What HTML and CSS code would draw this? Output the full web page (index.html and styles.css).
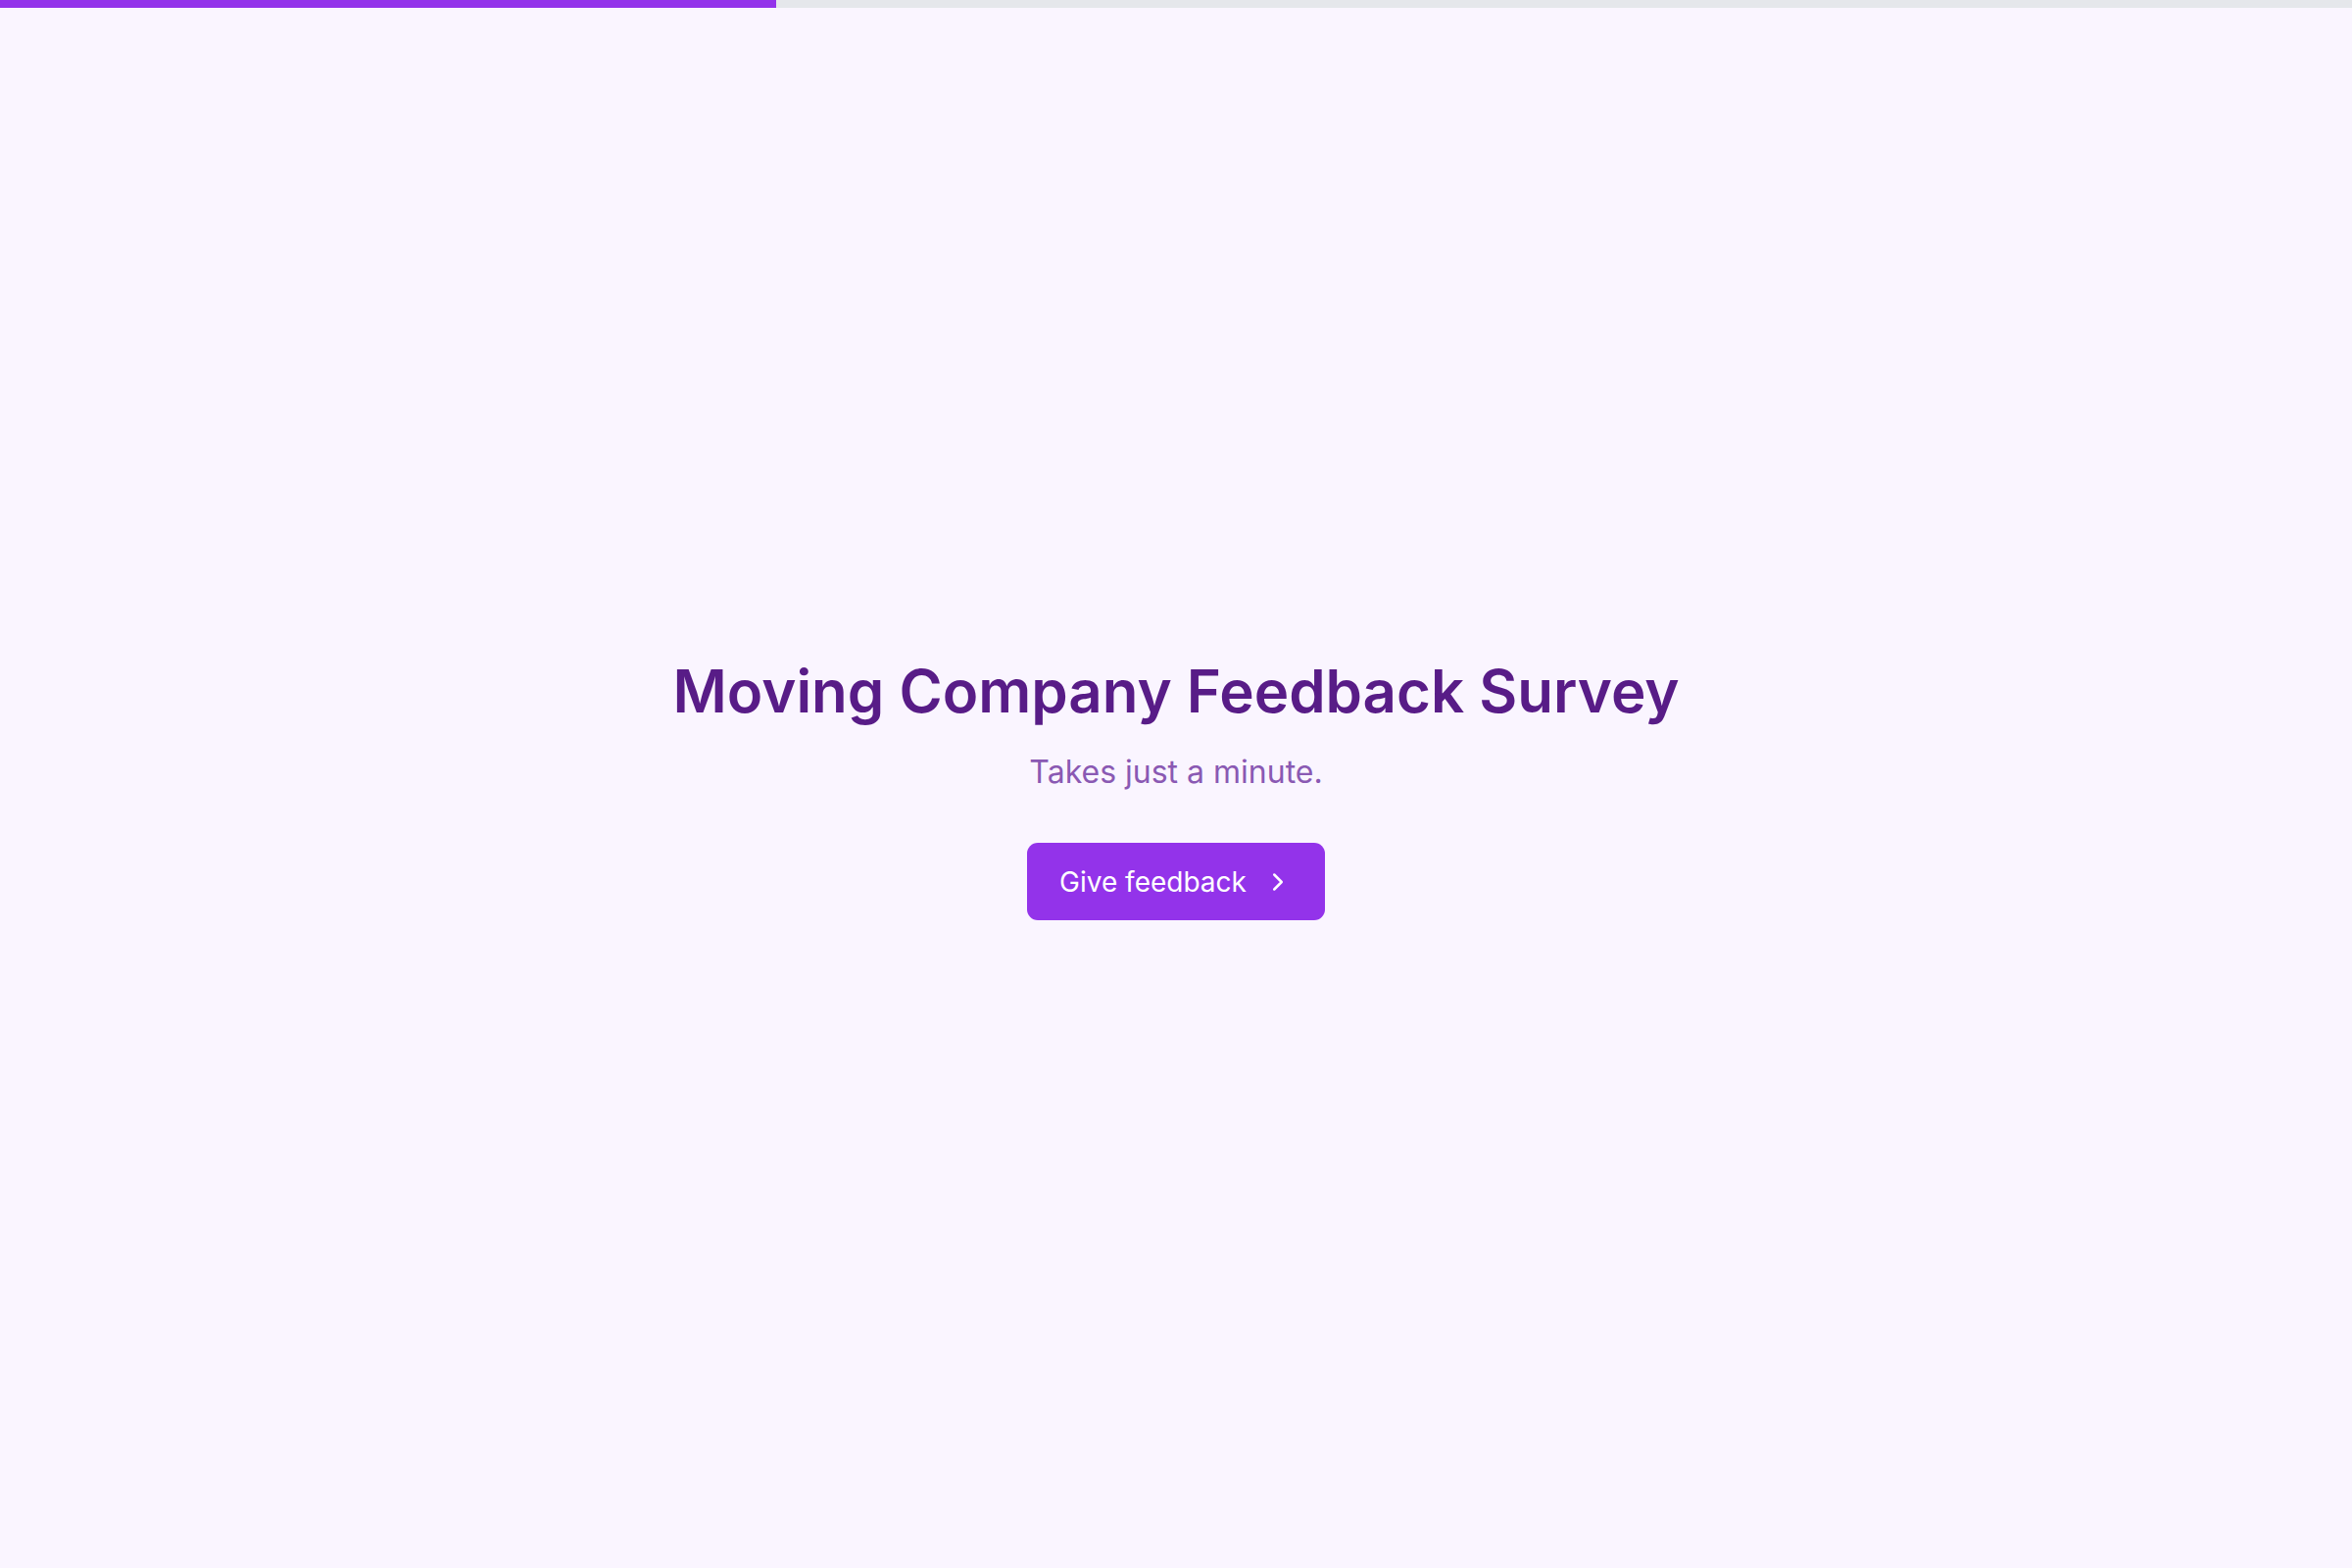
FILE: index.html
```html
<!DOCTYPE html>
<html lang="en">
<head>
<meta charset="utf-8">
<title>Moving Company Feedback Survey</title>
<link rel="stylesheet" href="styles.css">
</head>
<body>
<div class="progress"><div class="progress-fill" style="width:33%"></div></div>
<main class="intro">
  <h1 class="title">Moving Company Feedback Survey</h1>
  <p class="subtitle">Takes just a minute.</p>
  <button class="cta" type="button">
    <span>Give feedback</span>
    <svg class="cta-icon" viewBox="0 0 24 24" fill="none" stroke="currentColor" stroke-width="2" stroke-linecap="round" stroke-linejoin="round"><path d="m9 18 6-6-6-6"/></svg>
  </button>
</main>
</body>
</html>
```

FILE: styles.css
```css
* { box-sizing: border-box; }
html, body { margin: 0; padding: 0; }
body {
  min-height: 100vh;
  background: #faf5ff;
  font-family: Inter, "Noto Sans", sans-serif;
  display: flex;
  flex-direction: column;
}
.progress {
  height: 8px;
  background: #e5e7eb;
  width: 100%;
}
.progress-fill {
  height: 100%;
  background: #9333ea;
}
.intro {
  flex: 1;
  display: flex;
  flex-direction: column;
  align-items: center;
  justify-content: center;
  text-align: center;
}
.title {
  margin: 0;
  font-size: 60px;
  line-height: 72px;
  font-weight: 600;
  color: #581c87;
}
.subtitle {
  margin: 24px 0 0;
  font-size: 32px;
  line-height: 45px;
  color: #8a59b3;
}
.cta {
  margin-top: 50px;
  display: inline-flex;
  align-items: center;
  gap: 17px;
  height: 79px;
  padding: 0 33px;
  border: none;
  border-radius: 11px;
  background: #9333ea;
  color: #ffffff;
  font-family: inherit;
  font-size: 28px;
  font-weight: 400;
}
.cta-icon {
  width: 30px;
  height: 30px;
}
```
